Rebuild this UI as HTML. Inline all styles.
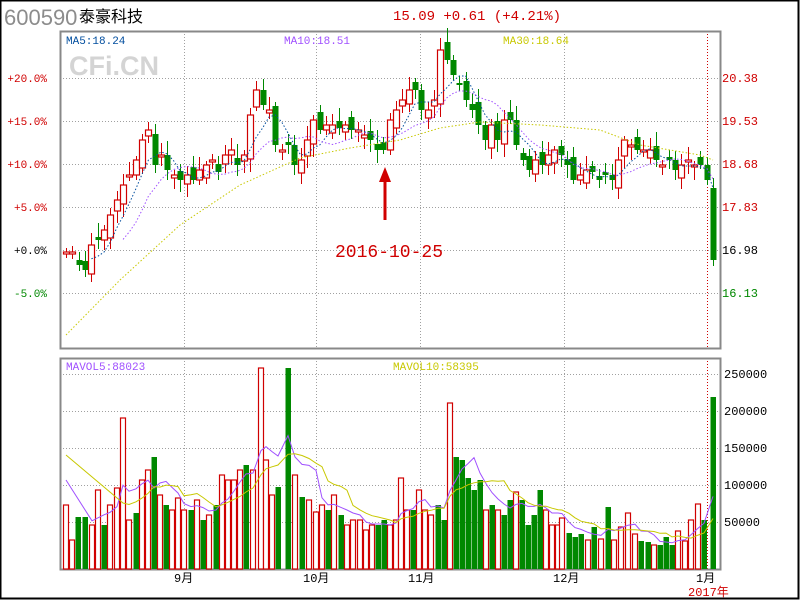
<!DOCTYPE html>
<html><head><meta charset="utf-8"><style>
html,body{margin:0;padding:0;background:#fff}
body{width:800px;height:600px;overflow:hidden;position:relative;font-family:"Liberation Mono","WenQuanYi Zen Hei",monospace}
svg{position:absolute;left:0;top:0}
</style></head><body>
<svg id="s" width="800" height="600" xmlns="http://www.w3.org/2000/svg" font-family="Liberation Mono, WenQuanYi Zen Hei, monospace">
<rect x="0.5" y="0.5" width="798" height="598" fill="#fff" stroke="#000" stroke-width="2"/>
<text x="4" y="25" font-family="Liberation Sans, sans-serif" font-size="22" fill="#8c8c8c">600590</text>
<text x="79" y="22" font-family="WenQuanYi Zen Hei, sans-serif" font-size="16" fill="#000">泰豪科技</text>
<text x="393" y="20" font-size="14" fill="#d00000">15.09 +0.61 (+4.21%)</text>
<g stroke="#a0a0a0" stroke-dasharray="1,2" stroke-width="1">
<line x1="60" y1="78.5" x2="720" y2="78.5"/><line x1="60" y1="121.5" x2="720" y2="121.5"/><line x1="60" y1="164.5" x2="720" y2="164.5"/><line x1="60" y1="207.5" x2="720" y2="207.5"/><line x1="60" y1="250.5" x2="720" y2="250.5"/><line x1="60" y1="293.5" x2="720" y2="293.5"/>
<line x1="60" y1="374.5" x2="720" y2="374.5"/><line x1="60" y1="411.5" x2="720" y2="411.5"/><line x1="60" y1="448.5" x2="720" y2="448.5"/><line x1="60" y1="485.5" x2="720" y2="485.5"/><line x1="60" y1="522.5" x2="720" y2="522.5"/>
<line x1="184.5" y1="31" x2="184.5" y2="348"/><line x1="316.5" y1="31" x2="316.5" y2="348"/><line x1="420.5" y1="31" x2="420.5" y2="348"/><line x1="564.5" y1="31" x2="564.5" y2="348"/>
<line x1="184.5" y1="358" x2="184.5" y2="569"/><line x1="316.5" y1="358" x2="316.5" y2="569"/><line x1="420.5" y1="358" x2="420.5" y2="569"/><line x1="564.5" y1="358" x2="564.5" y2="569"/>
</g>
<g stroke="#d00000" stroke-dasharray="1,2"><line x1="707.5" y1="31" x2="707.5" y2="348"/><line x1="707.5" y1="358" x2="707.5" y2="569"/></g>
<rect x="60.5" y="31.5" width="660" height="317" fill="none" stroke="#888" stroke-width="2"/>
<rect x="60.5" y="358.5" width="660" height="211" fill="none" stroke="#888" stroke-width="2"/>
<text x="69" y="75" font-family="Liberation Sans, sans-serif" font-weight="bold" font-size="27" fill="#d4d4d4">CFi.CN</text>
<text x="66" y="44" font-size="11" fill="#004d9e">MA5:18.24</text>
<text x="284" y="44" font-size="11" fill="#a050ff">MA10:18.51</text>
<text x="503" y="44" font-size="11" fill="#c8c800">MA30:18.64</text>
<g font-size="11" text-anchor="end"><text x="47" y="82" fill="#d00000">+20.0%</text><text x="47" y="125" fill="#d00000">+15.0%</text><text x="47" y="168" fill="#d00000">+10.0%</text><text x="47" y="211" fill="#d00000">+5.0%</text><text x="47" y="254" fill="#000">+0.0%</text><text x="47" y="297" fill="#008800">-5.0%</text></g>
<g font-size="12"><text x="722" y="82" fill="#d00000">20.38</text><text x="722" y="125" fill="#d00000">19.53</text><text x="722" y="168" fill="#d00000">18.68</text><text x="722" y="211" fill="#d00000">17.83</text><text x="722" y="254" fill="#000">16.98</text><text x="722" y="297" fill="#008800">16.13</text>
<text x="724" y="378">250000</text><text x="724" y="415">200000</text><text x="724" y="452">150000</text><text x="724" y="489">100000</text><text x="724" y="526">50000</text></g>
<text x="66" y="370" font-size="11" fill="#a050ff">MAVOL5:88023</text>
<text x="393" y="370" font-size="11" fill="#c8c800">MAVOL10:58395</text>
<g font-size="12" fill="#000"><text x="174" y="582">9月</text><text x="303" y="582">10月</text><text x="408" y="582">11月</text><text x="553" y="582">12月</text><text x="696" y="582">1月</text></g>
<text x="688" y="596" font-size="12" fill="#d00000">2017年</text>
<text x="335" y="257" font-family="Liberation Mono, monospace" font-size="18" fill="#d00000">2016-10-25</text>
<line x1="385" y1="220" x2="385" y2="178" stroke="#d00000" stroke-width="3"/><polygon points="385,167 379,182 391,182" fill="#d00000"/>
<g id="g"></g>
</svg>
<script>
var C=[252,252,265,270,245,240,230,215,200,185,175,160,140,130,165,155,170,175,180,175,180,170,165,160,172,155,150,165,155,115,90,105,110,145,150,145,165,160,140,120,130,125,125,128,125,130,130,135,140,150,150,120,110,100,90,90,110,110,100,50,60,75,85,100,110,125,140,125,140,120,120,145,160,170,160,165,155,150,155,165,180,175,170,172,180,175,180,160,140,145,150,150,150,160,165,160,170,165,160,165,165,180,260];
var V=[[66,505,1],[72,540,1],[78,517,0],[85,517,0],[92,525,1],[98,490,1],[104,525,0],[110,505,1],[117,488,1],[123,418,1],[129,520,1],[136,513,0],[142,480,1],[148,470,1],[154,457,0],[160,495,1],[166,505,0],[172,510,1],[178,498,1],[184,510,1],[191,510,0],[197,500,1],[203,520,0],[209,515,1],[216,505,0],[222,475,1],[228,480,1],[234,480,1],[240,470,1],[246,465,0],[253,470,1],[261,368,1],[266,460,1],[272,495,1],[278,487,0],[288,368,0],[295,475,1],[302,497,0],[309,500,1],[316,512,1],[322,505,1],[328,510,0],[334,495,1],[341,515,0],[347,525,1],[353,520,1],[360,520,1],[366,530,1],[372,525,1],[378,525,0],[384,520,0],[390,525,1],[396,520,1],[401,478,1],[407,510,1],[413,510,0],[419,490,1],[425,510,1],[431,515,1],[438,505,0],[444,520,0],[450,403,1],[456,457,0],[462,460,0],[468,478,0],[474,490,0],[480,480,0],[486,510,1],[492,505,0],[498,510,1],[504,515,0],[510,500,0],[516,492,1],[522,500,0],[528,525,0],[534,515,0],[540,490,0],[546,510,1],[552,525,1],[558,525,1],[562,518,1],[569,533,0],[575,537,0],[581,534,0],[588,540,1],[594,527,0],[601,539,1],[608,507,0],[614,540,1],[621,527,1],[628,513,1],[635,534,1],[641,541,0],[648,542,0],[654,545,1],[660,545,0],[666,537,0],[672,545,0],[678,531,1],[685,541,1],[691,520,1],[698,504,1],[704,520,0],[713,397,0]];
var n=C.length,h='',x0=66,x1=713,st=(x1-x0)/(n-1);
function X(i){return x0+i*st}
for(var i=0;i<n;i++){var c=C[i],o=i?C[i-1]+((i*7)%5-2)*4:254;if(Math.abs(o-c)<2)o=c+2;var up=c<o,x=Math.round(X(i));var t=Math.min(o,c)-4-(i*13)%11,b=Math.max(o,c)+4+(i*11)%10;var col=up?'#d00000':'#008800';
h+='<line x1="'+(x+.5)+'" y1="'+t+'" x2="'+(x+.5)+'" y2="'+b+'" stroke="'+col+'"/>';
if(up)h+='<rect x="'+(x-2.5)+'" y="'+c+'" width="6" height="'+(o-c)+'" fill="#fff" stroke="'+col+'" stroke-width="1.2"/>';
else h+='<rect x="'+(x-2.5)+'" y="'+o+'" width="6" height="'+(c-o)+'" fill="'+col+'"/>';}
function ma(a,k){var r=[];for(var i=0;i<a.length;i++){if(i<k-1){r.push(null);continue}var s=0;for(var j=0;j<k;j++)s+=a[i-j];r.push(s/k)}return r}
function pl(pts,col,dash,w){return '<polyline fill="none" stroke="'+col+'" stroke-width="'+(w||1)+'" '+(dash?'stroke-dasharray="'+dash+'"':'')+' points="'+pts+'"/>'}
var m5=ma(C,5),m10=ma(C,10),p5='',p10='';
for(i=0;i<n;i++){if(m5[i]!=null)p5+=X(i)+','+(m5[i]+2)+' ';if(m10[i]!=null)p10+=X(i)+','+(m10[i]+4)+' ';}
h+=pl(p5,'#004d9e','1.5,2')+pl(p10,'#a050ff','1.5,2');
h+=pl('66,335 120,280 180,225 240,185 300,158 350,148 400,140 440,128 480,122 540,125 600,130 640,145 700,155 713,160','#c8c800','1.5,2');
var vv=[];for(i=0;i<V.length;i++){var v=V[i],col=v[2]?'#d00000':'#008800';vv.push(v[1]);
if(v[2])h+='<rect x="'+(v[0]-2.5)+'" y="'+v[1]+'" width="5" height="'+(569-v[1])+'" fill="#fff" stroke="'+col+'" stroke-width="1.2"/>';
else h+='<rect x="'+(v[0]-2.5)+'" y="'+v[1]+'" width="5.5" height="'+(569-v[1])+'" fill="'+col+'"/>';}
var q5=ma(vv,5),q10=ma(vv,10),s5='',s10='66,455 ';
for(i=0;i<V.length;i++){if(q5[i]!=null)s5+=V[i][0]+','+q5[i]+' ';if(q10[i]!=null)s10+=V[i][0]+','+q10[i]+' ';}
s5='66,480 '+s5;
h+=pl(s5,'#a050ff',null,1)+pl(s10,'#c8c800',null,1);
document.getElementById('g').innerHTML=h;
</script>
</body></html>
